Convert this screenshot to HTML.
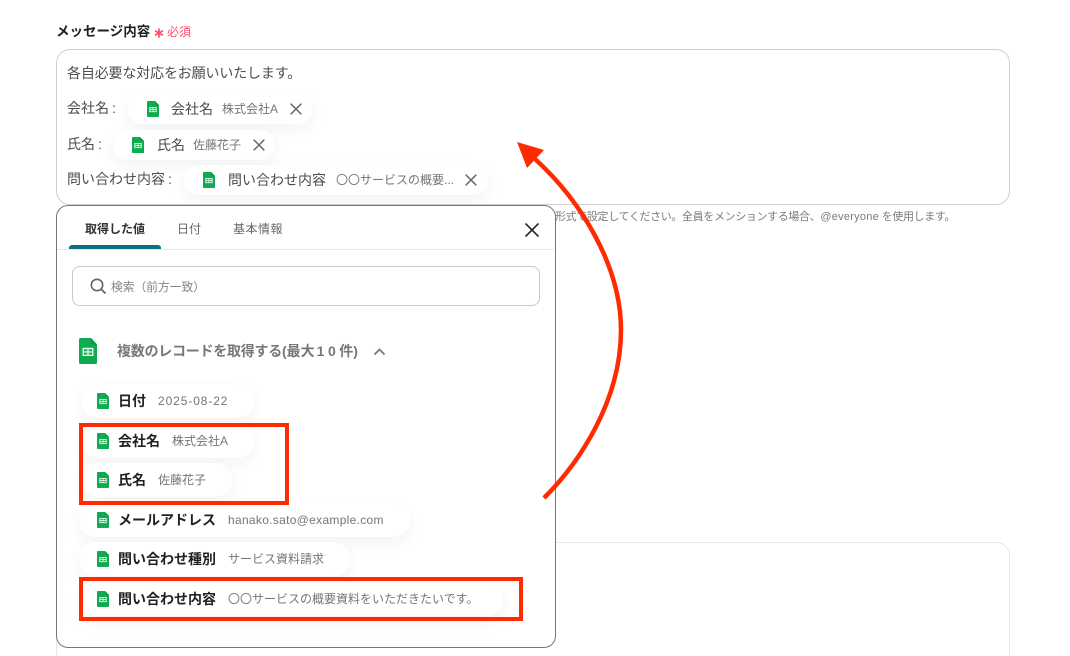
<!DOCTYPE html>
<html lang="ja"><head><meta charset="utf-8">
<style>
html,body{margin:0;padding:0;background:#fff}
#p{position:relative;width:1070px;height:656px;overflow:hidden;background:#fff;font-family:"Liberation Sans","Noto Sans CJK JP",sans-serif;color:#333}
#p div{position:absolute;white-space:nowrap}
.t{line-height:20px}
.chip{background:#fff;border-radius:16px;box-shadow:0 6px 16px rgba(30,40,70,.055)}
.k{font-size:14px;color:#4d4d4d;line-height:20px}
.k i{font-style:normal;margin-left:3px}
.v{font-size:12px;color:#757575;line-height:18px}
.b{font-size:14px;font-weight:700;color:#222;line-height:20px}
.red{border:4.5px solid #ff2a00;box-sizing:border-box}
svg{position:absolute;display:block}
</style></head><body><div id="p">
<svg width="0" height="0"><defs>
<symbol id="s" viewBox="0 0 18 26" preserveAspectRatio="none"><path d="M1.500 0H12L18 6.500V24.500A1.500 1.500 0 0 1 16.500 26H1.500A1.500 1.500 0 0 1 0 24.500V1.500A1.500 1.500 0 0 1 1.500 0Z" fill="#10ab50"/><path d="M12 0L18 6.500H13.200A1.200 1.200 0 0 1 12 5.300Z" fill="#0e9a47"/><path d="M3.500 9.800H14.500V18H3.500ZM5 11.200V13.200H8.300V11.200ZM9.700 11.200V13.200H13V11.200ZM5 14.600V16.600H8.300V14.600ZM9.700 14.600V16.600H13V14.600Z" fill="#e6f7ec" fill-rule="evenodd"/></symbol>
<symbol id="x" viewBox="0 0 12 12"><path d="M.7.700L11.300 11.300M11.300.700L.7 11.300" stroke="#6b6b6b" stroke-width="1.500" fill="none"/></symbol>
</defs></svg>

<div class="t" style="left:56px;top:22px;font-size:13.500px;font-weight:700;color:#222">メッセージ内容</div>
<svg style="left:154px;top:28px" width="10" height="10" viewBox="0 0 10 10"><path d="M5 .5V9.500M1 2.800L9 7.200M9 2.800L1 7.200" stroke="#ff4d6a" stroke-width="1.700" fill="none"/></svg>
<div style="left:167px;top:23px;font-size:12px;line-height:18px;color:#ff4d6a">必須</div>

<div style="left:56px;top:49px;width:952px;height:154px;border:1px solid #c9d0da;border-radius:14px;background:#fff"></div>
<div class="k" style="left:67px;top:63px;letter-spacing:-.15px">各自必要な対応をお願いいたします。</div>
<div class="k" style="left:67px;top:98px">会社名<i>:</i></div>
<div class="k" style="left:67px;top:134px">氏名<i>:</i></div>
<div class="k" style="left:67px;top:169px">問い合わせ内容<i>:</i></div>

<div class="chip" style="left:128px;top:94px;width:184px;height:30px"></div>
<svg style="left:147px;top:101px" width="12" height="16"><use href="#s" width="12" height="16"/></svg>
<div class="k" style="left:171px;top:99px">会社名</div>
<div class="v" style="left:222px;top:100px">株式会社A</div>
<svg style="left:290px;top:103px" width="12" height="12"><use href="#x"/></svg>

<div class="chip" style="left:113px;top:130px;width:162px;height:30px"></div>
<svg style="left:132px;top:137px" width="12" height="16"><use href="#s" width="12" height="16"/></svg>
<div class="k" style="left:157px;top:135px">氏名</div>
<div class="v" style="left:193px;top:136px">佐藤花子</div>
<svg style="left:253px;top:139px" width="12" height="12"><use href="#x"/></svg>

<div class="chip" style="left:184px;top:165px;width:304px;height:30px"></div>
<svg style="left:203px;top:172px" width="12" height="16"><use href="#s" width="12" height="16"/></svg>
<div class="k" style="left:228px;top:170px">問い合わせ内容</div>
<div class="v" style="left:336px;top:171px">〇〇サービスの概要...</div>
<svg style="left:465px;top:174px" width="12" height="12"><use href="#x"/></svg>

<div style="left:555px;top:209px;font-size:11px;line-height:16px;color:#7a7a7a;letter-spacing:-.36px">形式で設定してください。全員をメンションする場合、<span style="letter-spacing:.25px">@everyone</span> を使用します。</div>

<div style="left:56px;top:542px;width:952px;height:140px;border:1px solid #e8e8e8;border-radius:14px;background:#fff"></div>

<div style="left:56px;top:205px;width:500px;height:443px;box-sizing:border-box;border:1px solid #777;border-radius:12px;background:#fff"></div>
<div style="left:57px;top:249px;width:497px;height:1px;background:#e6e6e6"></div>
<div style="left:69px;top:245px;width:92px;height:4px;background:#0c6f84;border-radius:3px 3px 0 0"></div>
<div style="left:85px;top:220px;font-size:12px;line-height:18px;font-weight:700;color:#333">取得した値</div>
<div style="left:177px;top:220px;font-size:12px;line-height:18px;color:#666">日付</div>
<div style="left:233px;top:220px;font-size:12px;line-height:18px;color:#666;letter-spacing:.5px">基本情報</div>
<svg style="left:525px;top:223px" width="14" height="14" viewBox="0 0 14 14"><path d="M.5.500L13.500 13.500M13.500.500L.5 13.500" stroke="#222" stroke-width="1.600" fill="none"/></svg>

<div style="left:72px;top:266px;width:468px;height:40px;box-sizing:border-box;border:1px solid #c8c8c8;border-radius:8px"></div>
<svg style="left:90px;top:278px" width="16" height="16" viewBox="0 0 16 16"><circle cx="7" cy="7" r="5.700" stroke="#666" stroke-width="1.600" fill="none"/><path d="M11 11L15.500 15.500" stroke="#666" stroke-width="1.800" fill="none"/></svg>
<div style="left:111px;top:279px;font-size:11.750px;line-height:18px;color:#858585">検索（前方一致）</div>

<svg style="left:79px;top:338px" width="18" height="26"><use href="#s" width="18" height="26"/></svg>
<div style="left:117px;top:341px;font-size:14px;line-height:20px;font-weight:700;color:#777"><span style="letter-spacing:-.25px">複数のレコードを取得する</span>(最大<span style="letter-spacing:3.500px;margin-left:2px">10</span>件)</div>
<svg style="left:373px;top:347px" width="13" height="9" viewBox="0 0 13 9"><path d="M1.500 7.500L6.500 2.500L11.500 7.500" stroke="#777" stroke-width="1.800" fill="none"/></svg>

<div class="chip" style="left:82px;top:384px;width:172px;height:34px;border-radius:17px"></div>
<svg style="left:97px;top:393px" width="12" height="16"><use href="#s" width="12" height="16"/></svg>
<div class="b" style="left:118px;top:391px">日付</div>
<div class="v" style="left:158px;top:392px;letter-spacing:.9px">2025-08-22</div>

<div class="chip" style="left:82px;top:424px;width:172px;height:34px;border-radius:17px"></div>
<svg style="left:97px;top:433px" width="12" height="16"><use href="#s" width="12" height="16"/></svg>
<div class="b" style="left:118px;top:431px">会社名</div>
<div class="v" style="left:172px;top:432px">株式会社A</div>

<div class="chip" style="left:82px;top:463px;width:150px;height:34px;border-radius:17px"></div>
<svg style="left:97px;top:472px" width="12" height="16"><use href="#s" width="12" height="16"/></svg>
<div class="b" style="left:118px;top:470px">氏名</div>
<div class="v" style="left:158px;top:471px">佐藤花子</div>

<div class="chip" style="left:79px;top:503px;width:331px;height:34px;border-radius:17px"></div>
<svg style="left:97px;top:512px" width="12" height="16"><use href="#s" width="12" height="16"/></svg>
<div class="b" style="left:118px;top:510px">メールアドレス</div>
<div class="v" style="left:228px;top:511px;letter-spacing:.3px">hanako.sato@example.com</div>

<div class="chip" style="left:79px;top:542px;width:271px;height:34px;border-radius:17px"></div>
<svg style="left:97px;top:551px" width="12" height="16"><use href="#s" width="12" height="16"/></svg>
<div class="b" style="left:118px;top:549px">問い合わせ種別</div>
<div class="v" style="left:228px;top:550px">サービス資料請求</div>

<div class="chip" style="left:79px;top:582px;width:424px;height:34px;border-radius:17px"></div>
<svg style="left:97px;top:591px" width="12" height="16"><use href="#s" width="12" height="16"/></svg>
<div class="b" style="left:118px;top:589px">問い合わせ内容</div>
<div class="v" style="left:228px;top:590px">〇〇サービスの概要資料をいただきたいです。</div>

<div class="red" style="left:79px;top:423px;width:210px;height:82px"></div>
<div class="red" style="left:79px;top:577px;width:444px;height:44px"></div>

<svg style="left:0;top:0" width="1070" height="656" viewBox="0 0 1070 656"><path d="M544 498C580 462 621 400 621 330C621 265 580 200 535 159" stroke="#ff2a00" stroke-width="4.500" fill="none"/><path d="M517 142L544 150L527 168Z" fill="#ff2a00"/></svg>
</div></body></html>
